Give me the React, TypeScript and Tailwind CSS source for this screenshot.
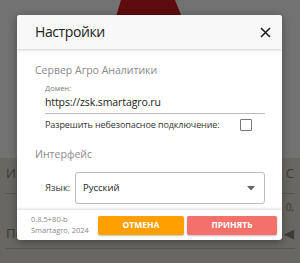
import React from "react";

export default function App() {
  const font = { fontFamily: '"Open Sans", "Noto Sans", sans-serif' };
  return (
    <div className="relative w-[300px] h-[263px] overflow-hidden bg-[#727272]" style={font}>
      {/* background page (dimmed) */}
      <svg className="absolute left-0 top-0" width="300" height="20">
        <polygon points="121,0 175,0 183,20 115,20" fill="#5e0c0c" />
      </svg>
      <div className="absolute left-0 right-0 top-[158px] bottom-0 bg-[#686762]">
        <div className="flex justify-between px-[6px] pt-[6px] text-[13px] text-[#3a3a38] h-[35px]">
          <span>Им</span>
          <span>С</span>
        </div>
        <div className="h-px bg-[#58574f] mx-[5px]" />
        <div className="flex justify-between px-[6px] pt-[6px] text-[10px] text-[#3a3a38] h-[30px]">
          <span></span>
          <span>0,</span>
        </div>
        <div className="flex justify-between items-center px-[6px] text-[13px] text-[#3a3a38] h-[20px]">
          <span>Пи</span>
          <span>◀</span>
        </div>
        <div className="h-px bg-[#58574f] mx-[5px] mt-[4px]" />
      </div>

      {/* modal */}
      <div className="absolute left-[17px] top-[15px] w-[265px] h-[225px] bg-white rounded-[3px] shadow-[0_2px_8px_rgba(0,0,0,0.35)] flex flex-col overflow-hidden">
        <div className="h-[34px] shrink-0 bg-[#f8f8f8] flex items-center justify-between pl-[18px] pr-[11px] shadow-[0_1px_3px_rgba(0,0,0,0.2)] z-10">
          <span className="text-[14px] text-[#222] leading-none tracking-[-0.4px]">Настройки</span>
          <svg width="11" height="11" viewBox="0 0 11 11">
            <path d="M1 1L10 10M10 1L1 10" stroke="#222" strokeWidth="1.6" />
          </svg>
        </div>
        <div className="flex-1 flex flex-col pl-[18px] pr-[17px]">
          <div className="mt-[14px] text-[10.5px] text-[#8a8a8a] leading-[14px] whitespace-nowrap">Сервер Агро Аналитики</div>
          <div className="ml-[10px]">
            <div className="mt-[6px] text-[7.5px] text-[#777] leading-[10px]">Домен:</div>
            <div className="mt-[1px] text-[10.5px] text-[#222] leading-[16px] border-b border-[#bbb] pb-[3px] whitespace-nowrap tracking-[-0.1px]">https://zsk.smartagro.ru</div>
            <div className="flex items-center justify-between mt-[4px] h-[14px]">
              <span className="text-[9px] text-[#333] whitespace-nowrap tracking-[-0.1px]">Разрешить небезопасное подключение:</span>
              <div className="w-[12px] h-[12px] border-[1.5px] border-[#777] rounded-[1px] mr-[13px]" />
            </div>
          </div>
          <div className="mt-[15px] text-[10.5px] text-[#8a8a8a] leading-[14px]">Интерфейс</div>
          <div className="ml-[10px] mt-[11px] flex items-center">
            <span className="text-[9.5px] text-[#333] w-[30px]">Язык:</span>
            <div className="flex-1 h-[32px] border border-[#bbb] rounded-[3px] flex items-center justify-between pl-[7px] pr-[9px]">
              <span className="text-[9.5px] text-[#222]">Русский</span>
              <svg width="8" height="5" viewBox="0 0 8 5"><path d="M0 0H8L4 4.5Z" fill="#666" /></svg>
            </div>
          </div>
        </div>
        <div className="h-[30px] shrink-0 flex items-center pl-[14px] pr-[5px] shadow-[0_-1px_3px_rgba(0,0,0,0.15)]">
          <div className="flex flex-col text-[7.5px] text-[#888] leading-[11px] w-[67px] whitespace-nowrap">
            <span>0.8.5+80-b</span>
            <span>Smartagro, 2024</span>
          </div>
          <button className="w-[86px] h-[19px] bg-[#ffa000] text-white text-[8.5px] font-bold rounded-[2px] shadow-[0_1px_2px_rgba(0,0,0,0.25)]">ОТМЕНА</button>
          <button className="ml-[3px] w-[90px] h-[19px] bg-[#f4706a] text-white text-[8.5px] font-bold rounded-[2px] shadow-[0_1px_2px_rgba(0,0,0,0.25)]">ПРИНЯТЬ</button>
        </div>
      </div>
    </div>
  );
}
